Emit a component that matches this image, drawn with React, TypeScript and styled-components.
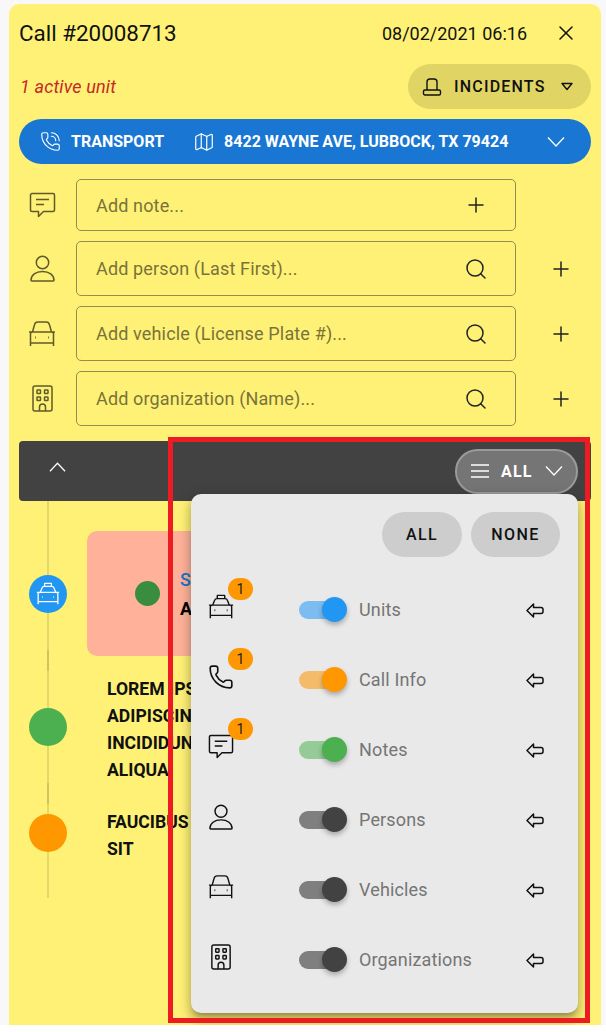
import styled, { createGlobalStyle } from "styled-components";
import { Phone, PhoneCall, Map as MapIcon, Plus, Search, X } from "lucide-react";

const GlobalStyle = createGlobalStyle`
  html, body {
    margin: 0;
    background: #fff;
    overflow: hidden;
  }
  * {
    box-sizing: border-box;
  }
  body {
    font-family: Roboto, "Liberation Sans", sans-serif;
  }
`;

const Page = styled.div`
  position: relative;
  height: 1025px;
  padding: 4px 5px 0 9px;
  background: #f8f8f8;
`;

const Panel = styled.main`
  position: relative;
  height: 100%;
  padding: 6px 10px 0;
  background: #fff176;
  border-radius: 10px 10px 0 0;
`;

const TitleRow = styled.header`
  display: flex;
  align-items: center;
  height: 44px;
  padding: 2px 0 0;
`;

const Title = styled.h1`
  flex: 1;
  margin: 0;
  font-size: 22.4px;
  font-weight: 400;
  color: #111;
`;

const DateText = styled.span`
  font-size: 18px;
  color: #111;
`;

const CloseButton = styled.span`
  display: flex;
  margin: 0 13px 0 27px;
  color: #111;
`;

const StatusRow = styled.div`
  display: flex;
  align-items: center;
  justify-content: space-between;
  margin-top: 10px;
`;

const ActiveUnits = styled.span`
  padding-left: 1px;
  font-size: 18px;
  font-style: italic;
  letter-spacing: 0.15px;
  color: #c62828;
`;

const IncidentsButton = styled.button`
  display: flex;
  align-items: center;
  width: 183px;
  height: 45px;
  padding: 0 0 0 14px;
  border: 0;
  border-radius: 23px;
  background: #e0d564;
  color: #111;
  font: 500 16px Roboto, sans-serif;
  letter-spacing: 1.2px;
`;

const IncidentsLabel = styled.span`
  margin: 0 15px 0 12px;
`;

const AddressBar = styled.div`
  display: flex;
  align-items: center;
  height: 45px;
  margin-top: 10px;
  padding: 0 26px 0 21px;
  border-radius: 23px;
  background: #1976d2;
  color: #fff;
  font-size: 16px;
  font-weight: 700;
`;

const AddressType = styled.span`
  margin: 0 29px 0 10px;
`;

const AddressText = styled.span`
  flex: 1;
  margin-left: 9px;
`;

const FormRows = styled.div`
  display: flex;
  flex-direction: column;
  gap: 10px;
  margin-top: 15px;
`;

const FormRow = styled.div`
  display: flex;
  align-items: center;
  color: #5f5a2c;
`;

const RowIcon = styled.span`
  display: flex;
  justify-content: center;
  width: 46px;
  margin-right: 11px;
`;

const Field = styled.label<{ $short?: boolean }>`
  display: flex;
  align-items: center;
  width: 440px;
  height: ${(p) => (p.$short ? 52 : 55)}px;
  padding: 0 27px 0 19px;
  border: 1px solid #958d50;
  border-radius: 5px;
  color: #222;
`;

const FieldInput = styled.input`
  flex: 1;
  min-width: 0;
  padding: 0;
  border: 0;
  outline: 0;
  background: transparent;
  font: 400 18px Roboto, sans-serif;
  letter-spacing: 0.15px;
  color: #222;

  &::placeholder {
    color: #79733a;
    opacity: 1;
  }
`;

const OutsideAdd = styled.span`
  display: flex;
  margin-left: 33px;
  color: #222;
`;

const DarkBar = styled.div`
  display: flex;
  align-items: center;
  justify-content: space-between;
  height: 60px;
  margin-top: 15px;
  padding: 0 13px 8px 30px;
  border-radius: 4px;
  background: #424242;
  color: #fff;
`;

const FilterButton = styled.button`
  display: flex;
  align-items: center;
  width: 123px;
  height: 45px;
  margin-top: 8px;
  padding: 0 0 0 14px;
  border: 2px solid #9a9a9a;
  border-radius: 23px;
  background: #757575;
  color: #fff;
  font: 700 16px Roboto, sans-serif;
  letter-spacing: 1.2px;
`;

const FilterLabel = styled.span`
  margin: 0 12px;
`;

const Timeline = styled.section`
  display: flex;
`;

const Rail = styled.div`
  display: flex;
  flex-direction: column;
  flex: none;
  width: 68px;
  padding-left: 10px;
`;

const Connector = styled.span<{ $height: number; $joint?: boolean }>`
  width: 2px;
  height: ${(p) => p.$height}px;
  margin-left: 18px;
  background: ${(p) => (p.$joint ? "#cdc45f" : "#e2d86c")};
`;

const Marker = styled.span<{ $color: string }>`
  display: flex;
  align-items: center;
  justify-content: center;
  width: 38px;
  height: 38px;
  border-radius: 50%;
  background: ${(p) => p.$color};
  color: #fff;
`;

const Entries = styled.div`
  flex: 1;
  min-width: 0;
`;

const UnitCard = styled.article`
  display: flex;
  align-items: center;
  height: 125px;
  margin: 30px 30px 0 0;
  padding-left: 48px;
  border-radius: 10px;
  background: #ffb299;
`;

const UnitDot = styled.span`
  width: 25px;
  height: 25px;
  border-radius: 50%;
  background: #388e3c;
`;

const UnitText = styled.div`
  margin-left: 20px;
  font-size: 18px;
  font-weight: 700;
  line-height: 29px;
`;

const UnitStatus = styled.div`
  color: #1976d2;
  font-weight: 500;
`;

const Entry = styled.p<{ $top: number }>`
  margin: ${(p) => p.$top}px 0 0 20px;
  font-size: 17.6px;
  font-weight: 700;
  line-height: 27px;
  white-space: nowrap;
  color: #111;
`;

const FilterMenu = styled.aside`
  position: absolute;
  z-index: 2;
  top: 490px;
  left: 182px;
  width: 387px;
  padding: 18px 0;
  border-radius: 10px;
  background: #e9e9e9;
  box-shadow: 0 5px 5px -3px rgba(0, 0, 0, 0.25), 0 8px 10px 1px rgba(0, 0, 0, 0.16),
    0 3px 14px 2px rgba(0, 0, 0, 0.14);
`;

const MenuActions = styled.div`
  display: flex;
  justify-content: flex-end;
  gap: 9px;
  margin-bottom: 18px;
  padding-right: 18px;
`;

const MenuAction = styled.button<{ $width: number }>`
  width: ${(p) => p.$width}px;
  height: 45px;
  padding: 0;
  border: 0;
  border-radius: 23px;
  background: #cdcdcd;
  color: #111;
  font: 500 16px Roboto, sans-serif;
  letter-spacing: 1.4px;
`;

const MenuRow = styled.div`
  display: flex;
  align-items: center;
  height: 70px;
  padding: 0 34px 0 17px;
`;

const MenuIcon = styled.span`
  position: relative;
  display: flex;
  justify-content: center;
  flex: none;
  width: 26px;
  margin-bottom: 6px;
  color: #111;
`;

const Badge = styled.span`
  position: absolute;
  top: -16px;
  left: 20px;
  width: 25px;
  height: 22px;
  border-radius: 11px;
  background: #ff9800;
  color: #222;
  font-size: 14px;
  line-height: 22px;
  text-align: center;
`;

const SwitchTrack = styled.span<{ $color: string }>`
  position: relative;
  flex: none;
  width: 46px;
  height: 18px;
  margin-left: 65px;
  border-radius: 9px;
  background: ${(p) => p.$color};
`;

const SwitchThumb = styled.span<{ $color: string }>`
  position: absolute;
  top: -4px;
  right: -2px;
  width: 25px;
  height: 25px;
  border-radius: 50%;
  background: ${(p) => p.$color};
  box-shadow: 0 3px 5px rgba(0, 0, 0, 0.28);
`;

const MenuLabel = styled.span`
  flex: 1;
  margin: 0 0 2px 14px;
  font-size: 18px;
  letter-spacing: 0.15px;
  color: #757575;
`;

const Highlight = styled.div`
  position: absolute;
  z-index: 3;
  top: 437px;
  left: 168px;
  width: 422px;
  height: 586px;
  border: 5px solid #ed1c24;
  pointer-events: none;
`;

type IconProps = { size?: number };

function NoteIcon({ size = 27 }: IconProps) {
  return (
    <svg width={size} height={size} viewBox="0 0 27 27" fill="none" stroke="currentColor" strokeWidth="1.5" strokeLinejoin="round">
      <path d="M3 1.5h21A1.5 1.5 0 0 1 25.5 3v15a1.5 1.5 0 0 1-1.5 1.5h-9.5l-5 5v-5H3A1.5 1.5 0 0 1 1.500 18V3A1.500 1.500 0 0 1 3 1.500z" />
      <path d="M7 7.500h13M7 12.500h8" />
    </svg>
  );
}

function PersonIcon({ size = 27 }: IconProps) {
  return (
    <svg width={size} height={size} viewBox="0 0 27 27" fill="none" stroke="currentColor" strokeWidth="1.5" strokeLinejoin="round">
      <circle cx="13.5" cy="7.500" r="6.200" />
      <path d="M2 25.300c0-5.300 4.800-8.800 11.500-8.800S25 20 25 25.300a.7.7 0 0 1-.7.700H2.700a.7.7 0 0 1-.7-.7z" />
    </svg>
  );
}

function CarIcon({ size = 28, taxi = false }: IconProps & { taxi?: boolean }) {
  return (
    <svg width={size} height={size} viewBox="0 0 28 28" fill="none" stroke="currentColor" strokeWidth="1.5" strokeLinejoin="round">
      {taxi && <path d="M10 5V1.500h8V5" />}
      <path
        d={
          taxi
            ? "M5 12l2-5a3 3 0 0 1 2.800-2h8.400a3 3 0 0 1 2.800 2l2 5"
            : "M4.500 12l2-7.200C6.900 3.200 8 2 9.800 2h8.400c1.800 0 2.900 1.200 3.300 2.800l2 7.200"
        }
      />
      <path d="M1 12h26M2.500 26V14a2 2 0 0 1 2-2h19a2 2 0 0 1 2 2v12M2.500 23h23" />
      <path d="M7 17.500h.8M20.200 17.500h.8" strokeWidth="2" />
    </svg>
  );
}

function BuildingIcon({ size = 27 }: IconProps) {
  return (
    <svg width={size} height={size} viewBox="0 0 27 27" fill="none" stroke="currentColor" strokeWidth="1.5" strokeLinejoin="round">
      <rect x="4" y="1" width="19" height="25" rx="2" />
      <rect x="8" y="5" width="3.500" height="3.500" rx=".6" />
      <rect x="15.500" y="5" width="3.500" height="3.500" rx=".6" />
      <rect x="8" y="12" width="3.500" height="3.500" rx=".6" />
      <rect x="15.500" y="12" width="3.500" height="3.500" rx=".6" />
      <path d="M10.500 26v-4a3 3 0 0 1 6 0v4" />
    </svg>
  );
}

function SirenIcon() {
  return (
    <svg width="20" height="20" viewBox="0 0 20 20" fill="none" stroke="currentColor" strokeWidth="1.4" strokeLinejoin="round">
      <path d="M5 13V5a3 3 0 0 1 3-3h4a3 3 0 0 1 3 3v8" />
      <rect x="1.500" y="13" width="17" height="5" rx="1.500" />
    </svg>
  );
}

function TriangleIcon() {
  return (
    <svg width="12" height="9" viewBox="0 0 12 9" fill="none" stroke="currentColor" strokeWidth="1.400" strokeLinejoin="round">
      <path d="M1 1.500h10L6 7.500z" />
    </svg>
  );
}

function Chevron({ up = false, width = 18 }: { up?: boolean; width?: number }) {
  return (
    <svg width={width} height="10" viewBox="0 0 18 10" fill="none" stroke="currentColor" strokeWidth="1.300">
      <path d={up ? "M1 9.500 9 1l8 8.500" : "M1 .5 9 9l8-8.500"} />
    </svg>
  );
}

function LinesIcon() {
  return (
    <svg width="18" height="16" viewBox="0 0 18 16" stroke="currentColor" strokeWidth="1.300">
      <path d="M0 2h18M0 8h18M0 14h18" />
    </svg>
  );
}

function SendBackIcon() {
  return (
    <svg width="18" height="15" viewBox="0 0 18 15" fill="none" stroke="#111" strokeWidth="1.500" strokeLinejoin="round">
      <path d="M1 7.500 7.500 1v3.500H15a2 2 0 0 1 2 2v2a2 2 0 0 1-2 2H7.500V14z" />
    </svg>
  );
}

type FormItem = {
  icon: React.ReactNode;
  placeholder: string;
  search?: boolean;
};

const formItems: FormItem[] = [
  { icon: <NoteIcon />, placeholder: "Add note..." },
  { icon: <PersonIcon />, placeholder: "Add person (Last First)...", search: true },
  { icon: <CarIcon />, placeholder: "Add vehicle (License Plate #)...", search: true },
  { icon: <BuildingIcon />, placeholder: "Add organization (Name)...", search: true },
];

type FilterItem = {
  icon: React.ReactNode;
  label: string;
  track: string;
  thumb: string;
  count?: number;
};

const filterItems: FilterItem[] = [
  { icon: <CarIcon size={26} taxi />, label: "Units", track: "#7cbcf0", thumb: "#2196f3", count: 1 },
  { icon: <Phone size={26} strokeWidth={1.5} />, label: "Call Info", track: "#f4bc6a", thumb: "#ff9800", count: 1 },
  { icon: <NoteIcon size={26} />, label: "Notes", track: "#94cb96", thumb: "#4caf50", count: 1 },
  { icon: <PersonIcon size={26} />, label: "Persons", track: "#7f7f7f", thumb: "#424242" },
  { icon: <CarIcon size={26} />, label: "Vehicles", track: "#7f7f7f", thumb: "#424242" },
  { icon: <BuildingIcon size={26} />, label: "Organizations", track: "#7f7f7f", thumb: "#424242" },
];

export default function App() {
  return (
    <Page>
      <GlobalStyle />
      <Panel>
        <TitleRow>
          <Title>Call #20008713</Title>
          <DateText>08/02/2021 06:16</DateText>
          <CloseButton>
            <X size={24} strokeWidth={1.5} />
          </CloseButton>
        </TitleRow>

        <StatusRow>
          <ActiveUnits>1 active unit</ActiveUnits>
          <IncidentsButton>
            <SirenIcon />
            <IncidentsLabel>INCIDENTS</IncidentsLabel>
            <TriangleIcon />
          </IncidentsButton>
        </StatusRow>

        <AddressBar>
          <PhoneCall size={21} strokeWidth={1.3} />
          <AddressType>TRANSPORT</AddressType>
          <MapIcon size={22} strokeWidth={1.3} />
          <AddressText>8422 WAYNE AVE, LUBBOCK, TX 79424</AddressText>
          <Chevron />
        </AddressBar>

        <FormRows>
          {formItems.map((item) => (
            <FormRow key={item.placeholder}>
              <RowIcon>{item.icon}</RowIcon>
              <Field $short={!item.search}>
                <FieldInput placeholder={item.placeholder} />
                {item.search ? <Search size={24} strokeWidth={1.5} /> : <Plus size={24} strokeWidth={1.5} />}
              </Field>
              {item.search && (
                <OutsideAdd>
                  <Plus size={24} strokeWidth={1.5} />
                </OutsideAdd>
              )}
            </FormRow>
          ))}
        </FormRows>

        <DarkBar>
          <Chevron up width={17} />
          <FilterButton>
            <LinesIcon />
            <FilterLabel>ALL</FilterLabel>
            <Chevron />
          </FilterButton>
        </DarkBar>

        <Timeline>
          <Rail>
            <Connector $height={74} />
            <Marker $color="#2196f3">
              <CarIcon size={24} taxi />
            </Marker>
            <Connector $height={37} />
            <Connector $height={21} $joint />
            <Connector $height={37} />
            <Marker $color="#4caf50" />
            <Connector $height={37} />
            <Connector $height={21} $joint />
            <Connector $height={10} />
            <Marker $color="#ff9800" />
            <Connector $height={46} />
          </Rail>
          <Entries>
            <UnitCard>
              <UnitDot />
              <UnitText>
                <UnitStatus>S</UnitStatus>
                <div>A</div>
              </UnitText>
            </UnitCard>
            <Entry $top={20}>
              LOREM IPSUM
              <br />
              ADIPISCING
              <br />
              INCIDIDUNT
              <br />
              ALIQUA.
            </Entry>
            <Entry $top={25}>
              FAUCIBUS
              <br />
              SIT
            </Entry>
          </Entries>
        </Timeline>

        <FilterMenu>
          <MenuActions>
            <MenuAction $width={80}>ALL</MenuAction>
            <MenuAction $width={89}>NONE</MenuAction>
          </MenuActions>
          {filterItems.map((item) => (
            <MenuRow key={item.label}>
              <MenuIcon>
                {item.icon}
                {item.count && <Badge>{item.count}</Badge>}
              </MenuIcon>
              <SwitchTrack $color={item.track}>
                <SwitchThumb $color={item.thumb} />
              </SwitchTrack>
              <MenuLabel>{item.label}</MenuLabel>
              <SendBackIcon />
            </MenuRow>
          ))}
        </FilterMenu>
      </Panel>
      <Highlight />
    </Page>
  );
}
